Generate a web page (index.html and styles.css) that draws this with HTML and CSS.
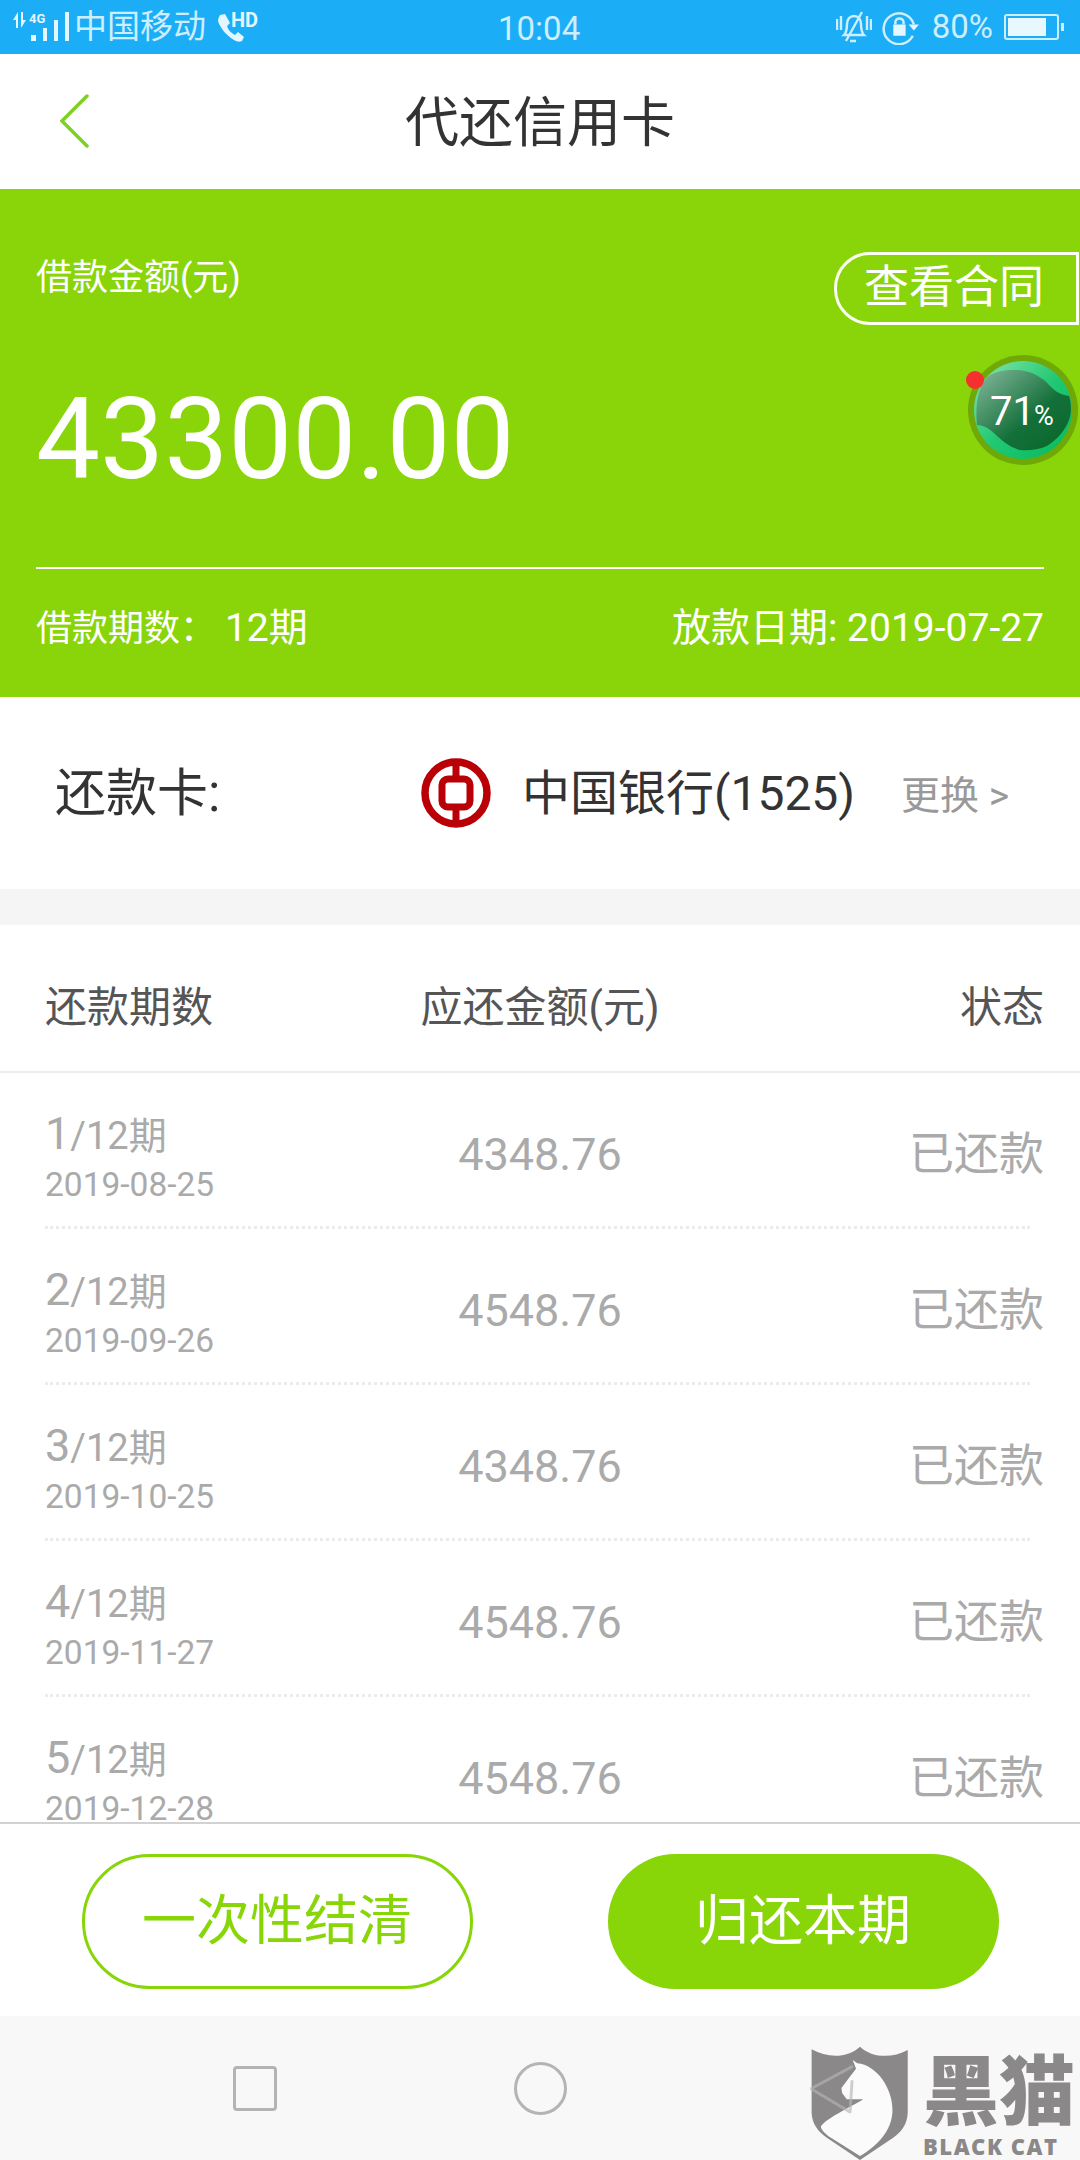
FILE: index.html
```html
<!DOCTYPE html>
<html lang="zh-CN">
<head>
<meta charset="utf-8">
<title>代还信用卡</title>
<link rel="stylesheet" href="styles.css">
</head>
<body>
<div class="page">
  <div class="status">
    <div class="status-left">
      <svg class="net" viewBox="0 0 58 32"><path class="sfill" d="M1 10 6 2V18H4V10ZM9 2V18L14 10H11V2Z"/><rect class="sfill" x="19" y="25" width="5" height="6"/><rect class="sfill" x="31" y="18" width="4" height="13"/><rect class="sfill" x="42" y="10" width="4" height="21"/><rect class="sfill" x="53" y="2" width="4" height="29"/></svg>
      <span class="tiny">4G</span>
      <span class="carrier">中国移动</span>
      <svg class="phone" viewBox="0 0 30 30"><path class="sfill" d="M4 2 9 1l5 9-3 3c1 4 4 7 8 9l3-3 6 5-2 4c-2 1-5 1-8-1C11 23 4 15 2 8c0-2 1-4 2-6Z"/></svg>
      <span class="hd">HD</span>
    </div>
    <span class="clock">10:04</span>
    <div class="status-right">
      <svg class="bell" viewBox="0 0 36 32"><path class="sline" d="M1 8v11M5 5v14M31 5v14M35 8v11M8 24c3-3 3-7 3-11 0-5 3-8 7-8s7 3 7 8c0 4 0 8 3 11ZM14 30h6M10 30 26 1"/></svg>
      <svg class="lock" viewBox="0 0 37 34"><path class="sline" d="M30 25A15 15 0 1 1 31 14"/><path class="sfill" d="M26 14h10l-5 6ZM11 14h12v11H11Z"/><path class="sline" d="M13 14v-2c0-5 8-5 8 0v2"/></svg>
      <span class="pct">80%</span>
      <div class="battery"><div class="battery-body"><div class="battery-fill"></div></div><div class="battery-nub"></div></div>
    </div>
  </div>

  <header class="nav">
    <svg class="back" viewBox="0 0 29 54"><path d="M27 2 2 27l25 25"/></svg>
    <h1 class="title">代还信用卡</h1>
  </header>

  <section class="hero">
    <div class="hero-top">
      <span class="hero-label">借款金额(元)</span>
      <span class="pill">查看合同</span>
    </div>
    <div class="amount">43300.00</div>
    <div class="hero-rule"></div>
    <div class="hero-bottom">
      <span>借款期数： <span class="hero-value">12期</span></span>
      <span class="hero-value">放款日期: 2019-07-27</span>
    </div>
    <svg class="badge" viewBox="0 0 120 120">
      <defs>
        <linearGradient id="ringg" x1="0" y1="0" x2="1" y2="1"><stop offset="0" stop-color="#8ce8b0"/><stop offset=".5" stop-color="#22c874"/><stop offset="1" stop-color="#06b85a"/></linearGradient>
        <linearGradient id="coreg" x1="0.1" y1="0.1" x2="0.85" y2="0.85"><stop offset="0" stop-color="#74ad8e"/><stop offset=".65" stop-color="#14703a"/><stop offset="1" stop-color="#0c6a2e"/></linearGradient>
      </defs>
      <circle cx="60" cy="60" r="55" fill="#70a808"/>
      <circle cx="60" cy="60" r="49" fill="url(#ringg)"/>
      <path d="M14 75C12 55 15 38 24 27 32 21 42 20 51 20 65 20 74 25 81 30 88 36 92 44 106 46 109 55 108 65 106 70 102 80 96 88 84 96 75 100 65 101 57 100 46 97 40 91 34 86 28 80 22 75 14 75Z" fill="url(#coreg)"/>
      <circle cx="12" cy="30" r="9" fill="#f5302f"/>
      <text x="27" y="75" class="badge-num">71</text>
      <text x="71" y="75" class="badge-pct">%</text>
    </svg>
  </section>

  <section class="bank">
    <span class="bank-label">还款卡:</span>
    <svg class="bank-logo" viewBox="0 0 70 70">
      <circle cx="35" cy="35" r="31" fill="none" stroke="#b80006" stroke-width="7.5"/>
      <rect x="21" y="21" width="28" height="28" rx="6" fill="none" stroke="#b80006" stroke-width="7"/>
      <path d="M35 4v17M35 49v17" stroke="#b80006" stroke-width="7"/>
    </svg>
    <span class="bank-name">中国银行(1525)</span>
    <span class="bank-change">更换 &gt;</span>
  </section>

  <section class="table">
    <div class="thead">
      <span>还款期数</span>
      <span class="th-mid">应还金额(元)</span>
      <span class="th-end">状态</span>
    </div>
    <div class="tbody">
      <div class="row"><div><div class="term"><b>1</b>/12期</div><div class="date">2019-08-25</div></div><div class="money">4348.76</div><div class="state">已还款</div></div>
      <div class="row"><div><div class="term"><b>2</b>/12期</div><div class="date">2019-09-26</div></div><div class="money">4548.76</div><div class="state">已还款</div></div>
      <div class="row"><div><div class="term"><b>3</b>/12期</div><div class="date">2019-10-25</div></div><div class="money">4348.76</div><div class="state">已还款</div></div>
      <div class="row"><div><div class="term"><b>4</b>/12期</div><div class="date">2019-11-27</div></div><div class="money">4548.76</div><div class="state">已还款</div></div>
      <div class="row"><div><div class="term"><b>5</b>/12期</div><div class="date">2019-12-28</div></div><div class="money">4548.76</div><div class="state">已还款</div></div>
    </div>
  </section>

  <footer class="actions">
    <div class="btn btn-line">一次性结清</div>
    <div class="btn btn-solid">归还本期</div>
  </footer>

  <div class="sysnav">
    <div class="sys-square"></div>
    <div class="sys-circle"></div>
    <div class="sys-slot"></div>
  </div>

  <div class="mark">
    <svg class="shield" viewBox="330 190 300 350">
      <path fill="#8a8888" d="M334 203C385 232 445 228 480 195 515 228 575 232 624 205V395C622 430 605 452 580 470L480 537 380 470C355 452 336 430 334 395Z"/>
      <path fill="#fbfbfb" d="M458 235 472 245C530 250 578 320 578 385 578 450 530 495 480 525L385 465C368 452 362 442 362 436 380 410 440 385 490 354H440L426 335 424 320 446 290 468 262Z"/>
      <path fill="none" stroke="#b5b5b5" stroke-opacity=".65" stroke-width="9" stroke-linejoin="round" stroke-linecap="round" d="M455 256 332 322 450 392 456 300"/>
    </svg>
    <div class="mark-text">
      <div class="mark-cn">黑猫</div>
      <div class="mark-en">BLACK CAT</div>
    </div>
  </div>
</div>
</body>
</html>
```

FILE: styles.css
```css
* { box-sizing: border-box; }
html, body { margin: 0; padding: 0; background: #fff; }
body { font-family: Roboto, "Noto Sans CJK SC", sans-serif; }
.page { position: relative; width: 1080px; height: 2160px; display: flex; flex-direction: column; overflow: hidden; }

.status { position: relative; flex: 0 0 54px; background: #1cadf7; color: #cdeefe; display: flex; align-items: center; justify-content: space-between; padding: 0 16px 0 12px; }
.status-left { position: relative; display: flex; align-items: center; height: 54px; }
.status-right { display: flex; align-items: center; height: 54px; }
.sfill { fill: #e4f6ff; }
.sline { fill: none; stroke: #cdeefe; stroke-width: 2.4; }
.net { width: 58px; height: 32px; margin-top: -2px; }
.tiny { position: absolute; left: 17px; top: 12px; font-size: 13px; font-weight: 700; line-height: 14px; color: #e4f6ff; }
.carrier { font-size: 33px; line-height: 56px; margin-left: 4px; }
.phone { width: 30px; height: 30px; margin: 2px 0 0 10px; }
.hd { font-size: 20px; font-weight: 700; line-height: 20px; margin: -14px 0 0 -15px; color: #e4f6ff; }
.clock { position: absolute; left: 498px; top: 0; font-size: 33px; line-height: 58px; }
.bell { width: 36px; height: 32px; margin-right: 10px; }
.lock { width: 38px; height: 35px; margin-right: 12px; }
.pct { font-size: 33px; line-height: 56px; margin-right: 11px; }
.battery { display: flex; align-items: center; }
.battery-body { width: 55px; height: 26px; border: 2px solid #cdeefe; border-radius: 3px; padding: 2px; }
.battery-fill { width: 80%; height: 100%; background: #e8f8ff; }
.battery-nub { width: 3px; height: 8px; background: #cdeefe; margin-left: 2px; }

.nav { position: relative; flex: 0 0 135px; display: flex; align-items: center; justify-content: center; background: #fff; padding-top: 5px; }
.back { position: absolute; left: 60px; top: 40px; width: 29px; height: 54px; }
.back path { fill: none; stroke: #7fd024; stroke-width: 3.5; stroke-linecap: round; stroke-linejoin: miter; }
.title { margin: 0; font-size: 54px; font-weight: 400; color: #333; line-height: 70px; }

.hero { position: relative; flex: 0 0 508px; background: #89d50a; color: #fff; padding: 63px 36px 0; }
.hero-top { display: flex; justify-content: space-between; align-items: flex-start; height: 73px; }
.hero-label { font-size: 36px; line-height: 52px; }
.pill { width: 245px; height: 73px; margin-right: -35px; padding-left: 27px; border: 3px solid #fbfff0; border-radius: 36px 0 0 36px; font-size: 45px; line-height: 66px; }
.amount { margin-top: 49px; font-size: 114px; line-height: 130px; }
.hero-rule { margin-top: 63px; height: 1.5px; background: #fff; }
.hero-bottom { display: flex; justify-content: space-between; align-items: baseline; margin-top: 34px; font-size: 36px; line-height: 50px; }
.hero-value { font-size: 39px; }
.badge { position: absolute; left: 963px; top: 161px; width: 120px; height: 120px; }
.badge-num { font-family: Roboto, sans-serif; font-size: 40px; fill: #fff; }
.badge-pct { font-family: Roboto, sans-serif; font-size: 27px; fill: #fff; }

.bank { flex: 0 0 192px; display: flex; align-items: center; background: #fff; padding-left: 55px; }
.bank-label { width: 366px; margin-top: 2px; font-size: 51px; line-height: 70px; color: #333; }
.bank-logo { width: 70px; height: 70px; }
.bank-name { margin-left: 31px; margin-top: 1px; font-size: 48px; line-height: 70px; color: #333; white-space: nowrap; }
.bank-change { margin-left: 46px; margin-top: -3px; font-size: 39px; color: #999; white-space: nowrap; }

.table { flex: 1 1 0; min-height: 0; margin-top: 36px; display: flex; flex-direction: column; position: relative; }
.table::before { content: ""; position: absolute; left: 0; right: 0; top: -36px; height: 36px; background: #f5f5f5; }
.thead { flex: 0 0 148px; display: grid; grid-template-columns: 330px 330px 1fr; align-items: center; padding: 10px 36px 0 45px; font-size: 42px; color: #555; border-bottom: 2px solid #ececec; }
.th-mid { text-align: center; }
.th-end { text-align: right; }
.tbody { flex: 1 1 0; min-height: 0; overflow: hidden; }
.row { height: 156px; margin: 0 50px 0 45px; padding-top: 36px; display: grid; grid-template-columns: 330px 330px 1fr; align-items: start; border-bottom: 3px dotted #ebebeb; color: #aaa; }
.term { font-size: 38px; line-height: 50px; }
.term b { font-size: 45px; font-weight: 400; }
.date { margin-top: 4px; font-size: 33.5px; line-height: 40px; }
.money { text-align: center; font-size: 45px; line-height: 92px; }
.state { text-align: right; margin-right: -14px; font-size: 45px; line-height: 92px; }

.actions { flex: 0 0 194px; display: flex; justify-content: center; gap: 135px; padding-top: 30px; background: #fff; border-top: 2px solid #d2d2d2; }
.btn { width: 391px; height: 135px; border-radius: 68px; font-size: 54px; line-height: 135px; text-align: center; }
.btn-line { border: 3px solid #88d508; color: #88d508; line-height: 129px; }
.btn-solid { background: #88d508; color: #fff; }

.sysnav { flex: 0 0 144px; background: #f8f8f8; display: grid; grid-template-columns: repeat(3, 285px); justify-content: center; justify-items: center; align-items: center; }
.sys-square { width: 44px; height: 45px; border: 3px solid #b4b4b4; border-radius: 4px; }
.sys-circle { width: 53px; height: 53px; border: 3px solid #b4b4b4; border-radius: 50%; }
.sys-slot { width: 52px; height: 44px; }

.mark { position: absolute; left: 810px; top: 2045px; display: flex; gap: 13px; }
.shield { width: 100px; height: 116px; }
.mark-text { color: #8a8888; padding-top: 9px; }
.mark-cn { font-size: 76px; font-weight: 900; line-height: 78px; white-space: nowrap; }
.mark-en { margin-top: 2px; font-size: 22px; font-weight: 800; line-height: 24px; letter-spacing: 1.5px; white-space: nowrap; font-family: "Open Sans", sans-serif; }
```
